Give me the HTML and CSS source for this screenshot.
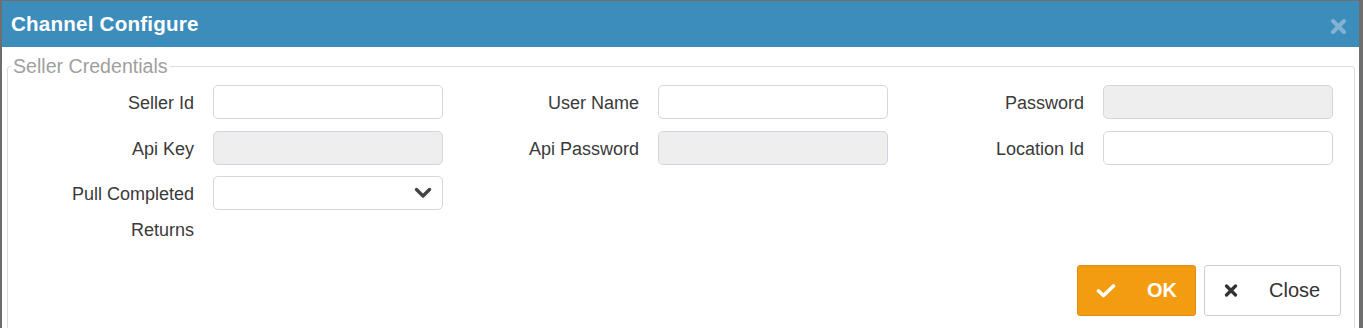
FILE: index.html
```html
<!DOCTYPE html>
<html lang="en">

<head>
    <meta charset="utf-8">
    <meta name="viewport" content="width=device-width, initial-scale=1">
    <title>Channel Configure</title>
    <link rel="stylesheet" href="styles.css">
</head>

<body>
    <div class="modal">
        <div class="modal-header">
            <h4 class="modal-title">Channel Configure</h4>
            <button class="close" type="button">
                <svg width="17" height="17" viewBox="0 0 17 17"><path d="M3 3 L14 14 M14 3 L3 14" stroke="currentColor" stroke-width="4" stroke-linecap="round"/></svg>
            </button>
        </div>
        <div class="modal-body">
            <fieldset class="creds">
                <legend>Seller Credentials</legend>
                <div class="form-grid">
                    <div class="field">
                        <label>Seller Id</label>
                        <input class="form-control" type="text">
                    </div>
                    <div class="field">
                        <label>User Name</label>
                        <input class="form-control" type="text">
                    </div>
                    <div class="field">
                        <label>Password</label>
                        <input class="form-control" type="password" disabled>
                    </div>
                    <div class="field">
                        <label>Api Key</label>
                        <input class="form-control" type="text" disabled>
                    </div>
                    <div class="field">
                        <label>Api Password</label>
                        <input class="form-control" type="password" disabled>
                    </div>
                    <div class="field">
                        <label>Location Id</label>
                        <input class="form-control" type="text">
                    </div>
                    <div class="field">
                        <label>Pull Completed Returns</label>
                        <div class="select-box">
                            <svg width="18" height="12" viewBox="0 0 18 12"><path d="M2.5 2.5 L9 9 L15.5 2.5" fill="none" stroke="currentColor" stroke-width="3.4" stroke-linecap="round" stroke-linejoin="round"/></svg>
                        </div>
                    </div>
                </div>
                <div class="actions">
                    <button class="btn btn-ok" type="button">
                        <svg width="20" height="14" viewBox="0 0 20 14"><path d="M2.5 7 L7.5 11.5 L17.5 2" fill="none" stroke="currentColor" stroke-width="3.6" stroke-linecap="round" stroke-linejoin="round"/></svg>
                        <span>OK</span>
                    </button>
                    <button class="btn btn-cancel" type="button">
                        <svg width="14" height="13" viewBox="0 0 14 13"><path d="M2.5 2 L11.5 11 M11.5 2 L2.5 11" stroke="currentColor" stroke-width="3.2" stroke-linecap="round"/></svg>
                        <span>Close</span>
                    </button>
                </div>
            </fieldset>
        </div>
    </div>
</body>

</html>
```

FILE: styles.css
```css
body {
    margin: 0;
    background: #6e6e6e;
    font-family: "Liberation Sans", Arial, sans-serif;
    color: #333;
    overflow: hidden;
}

.modal {
    margin: 1px 4px 0 2px;
    background: #fff;
    height: 400px;
}

.modal-header {
    display: flex;
    align-items: center;
    justify-content: space-between;
    height: 46px;
    padding: 0 12px 0 9px;
    background: #3c8dbc;
}

.modal-title {
    margin: 0;
    font-size: 20.6px;
    font-weight: 700;
    color: #fff;
    letter-spacing: 0.2px;
}

.close {
    display: flex;
    padding: 0;
    margin-top: 4px;
    border: 0;
    background: none;
    color: #80b3d4;
}

.modal-body {
    padding: 9px 4px 0 5px;
}

.creds {
    min-width: 0;
    margin: 0;
    padding: 0 13px 40px 3px;
    border: 1px solid #dcdcdc;
    border-radius: 3px;
}

.creds legend {
    padding: 0 2px;
    font-size: 19.6px;
    line-height: 20px;
    color: #a0a0a0;
}

.form-grid {
    display: grid;
    grid-template-columns: 445px 445px 1fr;
    row-gap: 9.5px;
    margin-top: 9px;
}

.field {
    display: grid;
    grid-template-columns: 183px 230px;
    column-gap: 19px;
    align-items: start;
}

.field label {
    text-align: right;
    font-size: 18px;
    line-height: 36px;
    color: #3a3a3a;
}

.form-control,
.select-box {
    box-sizing: border-box;
    width: 230px;
    height: 34px;
    margin: 0;
    border: 1px solid #d2d6de;
    border-radius: 5px;
    background: #fff;
}

.form-control:disabled {
    background: #eeeeee;
}

.select-box {
    display: flex;
    align-items: center;
    justify-content: flex-end;
    padding-right: 10px;
    color: #444;
}

.actions {
    display: flex;
    justify-content: flex-end;
    gap: 8px;
    margin-top: 17px;
}

.btn {
    display: flex;
    align-items: center;
    height: 51px;
    padding: 0 18px;
    border-radius: 3px;
    font-family: inherit;
    font-size: 20px;
}

.btn svg {
    margin-right: 31px;
}

.btn-ok {
    width: 119px;
    border: 1px solid #e08e0b;
    background: #f39c12;
    color: #fff;
    font-weight: 700;
}

.btn-cancel {
    width: 137px;
    padding-left: 19px;
    border: 1px solid #cfcfcf;
    background: #fff;
    color: #333;
}
```
